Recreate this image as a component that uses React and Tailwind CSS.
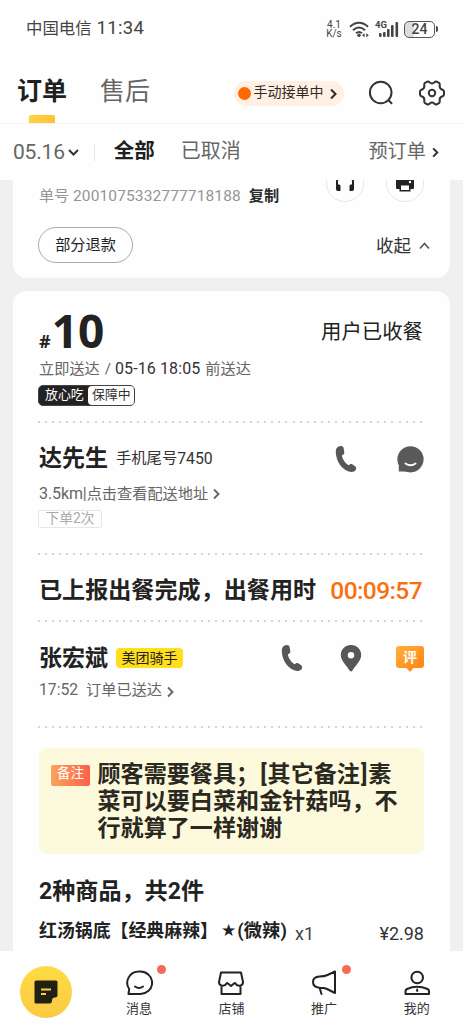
import React from "react";

const Chevron = ({ className, d = "M2 1.5 L6.5 6 L2 10.5", w = 2 }) => (
  <svg viewBox="0 0 8 12" className={className} fill="none" stroke="currentColor" strokeWidth={w}>
    <path d={d} />
  </svg>
);

const Dots = ({ className = "" }) => (
  <div
    className={
      "h-[2px] w-[387px] shrink-0 -ml-px bg-[repeating-linear-gradient(90deg,#d4d4d4_0_2px,transparent_2px_7.07px)] " +
      className
    }
  />
);

const Phone = () => (
  <svg viewBox="0 0 22 28" className="h-[28px] w-[22px]" fill="#55585a">
    <path d="M5.500 1.100C3 1.300.8 3 .8 7C.9 16.500 7.500 26.300 16.200 26.900C18.600 27 20.300 26 21 24.200C21.500 22.900 21 21.800 19.800 21L17.200 19.300C15.800 18.400 14.900 19.200 13.700 20.300C10.500 18.800 7.300 14 6.900 10.300C8.500 9.700 9.500 9.200 9.300 7.500L8.700 3.500C8.400 1.700 7.200 .9 5.500 1.100Z" />
  </svg>
);

function StatusBar() {
  return (
    <div className="flex h-[58px] items-center pl-[26px] pr-[25px] text-[#444]">
      <span className="mt-px whitespace-nowrap text-[16.400px]">中国电信</span>
      <span className="ml-[5px] text-[18.500px] tracking-[0.300px]">11:34</span>
      <div className="ml-auto flex items-center">
        <div className="mr-[7px] w-[16px] text-center text-[10px] leading-[9.500px]">
          4.1
          <br />
          K/s
        </div>
        <svg viewBox="0 0 20 17" className="h-[17px] w-[20px]" fill="none" stroke="#444" strokeWidth="2">
          <path d="M1 5.800C6.500.500 13.500.500 19 5.800M4 9.200C8 5.500 12 5.500 16 9.200M7 12.300Q10 9.600 13 12.300" />
          <circle cx="10" cy="14.300" r="1.700" fill="#444" stroke="none" />
          <path d="M13 14.200L15.600 12.200V16.200ZM19.800 14.200L17.200 12.200V16.200Z" fill="#444" stroke="none" />
        </svg>
        <div className="relative ml-[6px] h-[18px] w-[24px]">
          <span className="absolute left-0 top-0 text-[9.500px] font-bold leading-[9px]">4G</span>
          <svg viewBox="0 0 24 18" className="h-[18px] w-[24px]" fill="#444">
            <rect x="4" y="13" width="2.600" height="4" rx="1" />
            <rect x="8" y="12" width="2.600" height="5" rx="1" />
            <rect x="12" y="9" width="2.600" height="8" rx="1" />
            <rect x="16" y="5" width="2.600" height="12" rx="1" />
            <rect x="20.500" y="2" width="2.600" height="15" rx="1" />
          </svg>
        </div>
        <div className="ml-[5px] flex h-[17px] w-[31px] items-center justify-center rounded-[5px] border-[1.500px] border-[#555] bg-[linear-gradient(90deg,#ddd_0_30%,#fff_30%)] text-[14px] font-medium leading-none">
          24
        </div>
        <div className="ml-px h-[6px] w-[2px] rounded-r bg-[#444]" />
      </div>
    </div>
  );
}

function Header() {
  return (
    <div className="flex h-[66px] border-b border-[#f4f4f4] pl-[16px] pr-[18px]">
      <div className="flex w-[52px] flex-col items-center">
        <span className="mt-[19px] whitespace-nowrap text-[25px] font-bold leading-[30px] text-[#202020]">订单</span>
        <span className="mt-[8px] h-[8px] w-[26px] rounded-t-[2px] bg-linear-to-r from-[#ffd43d] to-[#ffc13b]" />
      </div>
      <span className="ml-[32px] mt-[19px] whitespace-nowrap text-[25px] leading-[30px] text-[#666]">售后</span>
      <div className="ml-auto mt-[23px] flex h-[25px] w-[110px] items-center rounded-full bg-[#fff0e5] pl-[4px] text-[#35291f]">
        <span className="h-[13px] w-[13px] rounded-full bg-[#ff6a00]" />
        <span className="-mt-[3px] ml-[2.500px] whitespace-nowrap text-[14px] leading-[20px]">手动接单中</span>
        <Chevron className="ml-[5px] h-[12px] w-[8px]" />
      </div>
      <svg viewBox="0 0 26 26" className="ml-[24px] mt-[22px] h-[26px] w-[26px]" fill="none" stroke="#333" strokeWidth="2" strokeLinecap="round">
        <circle cx="12.700" cy="12.500" r="10.800" />
        <path d="M20.500 20.200L23.500 23.200" />
      </svg>
      <svg viewBox="0 0 26 26" className="ml-[25px] mt-[22px] h-[26px] w-[26px]" fill="none" stroke="#333" strokeWidth="2" strokeLinejoin="round">
        <path d="M8.200 1.700Q9.500 1.300 10.500 2.300Q13 4.600 15.500 2.300Q16.500 1.300 17.800 1.700L20.300 3.200Q21 4 20.700 5.400Q20.300 8.600 23 9.500Q24.800 10.100 25 11.500V14.500Q24.800 15.900 23 16.500Q20.300 17.400 20.700 20.600Q21 22 20.300 22.800L17.800 24.300Q16.500 24.700 15.500 23.700Q13 21.400 10.500 23.700Q9.500 24.700 8.200 24.300L5.700 22.800Q5 22 5.300 20.600Q5.700 17.400 3 16.500Q1.200 15.900 1 14.500V11.500Q1.200 10.100 3 9.500Q5.700 8.600 5.300 5.400Q5 4 5.700 3.200Z" />
        <circle cx="13" cy="13" r="3.200" />
      </svg>
    </div>
  );
}

function Filters() {
  return (
    <div className="flex h-[56px] items-center pl-[13px] pr-[24px] text-[#666]">
      <span className="mt-[2px] text-[21px] tracking-[-0.200px]">05.16</span>
      <svg viewBox="0 0 11 7" className="ml-[3px] h-[7px] w-[11px]" fill="none" stroke="#333" strokeWidth="2">
        <path d="M1 1L5.500 5.500L10 1" />
      </svg>
      <span className="ml-[15px] h-[17px] w-px bg-[#e4e4e4]" />
      <span className="ml-[19px] -mt-[2px] whitespace-nowrap text-[20.500px] font-bold text-[#202020]">全部</span>
      <span className="ml-[26px] -mt-[2px] whitespace-nowrap text-[20px]">已取消</span>
      <span className="ml-auto mt-px whitespace-nowrap text-[19.200px]">预订单</span>
      <Chevron className="ml-[5px] h-[11px] w-[8px] text-[#333]" w={2.2} />
    </div>
  );
}

function PreviousOrder() {
  return (
    <div className="mx-[13px] flex h-[98px] flex-col overflow-hidden rounded-b-[14px] bg-[#fefefe] pl-[26px] pr-[20px]">
      <div className="flex h-[40px] items-start">
        <span className="mt-[5px] whitespace-nowrap text-[15px] leading-[22px] text-[#959595]">单号</span>
        <span className="ml-[4px] mt-[5px] text-[15.500px] leading-[22px] tracking-[0.120px] text-[#959595]">2001075332777718188</span>
        <span className="ml-[8px] mt-[5px] whitespace-nowrap text-[15.200px] font-bold leading-[22px] text-[#2c2c2c]">复制</span>
        <div className="ml-auto mr-[22px] mt-[-16px] flex h-[38px] w-[38px] shrink-0 items-center justify-center rounded-full border border-[#e5e5e5]">
          <svg viewBox="0 0 20 20" className="h-[20px] w-[20px]" fill="none" stroke="#222" strokeWidth="2">
            <path d="M2 14V9a8 8 0 0 1 16 0v5" />
            <path d="M1 11.500H4.500Q5.500 12 5.500 13V18H2.800Q1 18 1 16ZM19 11.500H15.500Q14.500 12 14.500 13V18H17.200Q19 18 19 16Z" fill="#222" stroke="none" />
          </svg>
        </div>
        <div className="mr-[6px] mt-[-16px] flex h-[38px] w-[38px] shrink-0 items-center justify-center rounded-full border border-[#e5e5e5]">
          <svg viewBox="0 0 18 20" className="h-[20px] w-[18px]" fill="#222">
            <path d="M4 1H14V5H4ZM2 6H16Q18 6 18 8V15Q18 16 17 16H14.500V18.500H3.500V16H1Q0 16 0 15V8Q0 6 2 6Z" />
            <path d="M5 12.500H13V17H5Z" fill="#fff" />
            <circle cx="14" cy="9" r="1.200" fill="#fff" />
          </svg>
        </div>
      </div>
      <div className="mt-[7px] flex h-[36px] items-center">
        <span className="-ml-px flex h-[36px] w-[95px] items-center justify-center whitespace-nowrap rounded-full border border-[#aaa] text-[15.200px] text-[#222]">部分退款</span>
        <span className="ml-auto mt-[3px] whitespace-nowrap text-[17.500px] text-[#333]">收起</span>
        <svg viewBox="0 0 11 8" className="ml-[8px] mt-[2px] h-[8px] w-[11px]" fill="none" stroke="#555" strokeWidth="1.600">
          <path d="M1 6.500L5.500 1.500L10 6.500" />
        </svg>
      </div>
    </div>
  );
}

function Order() {
  return (
    <div className="mx-[13px] mt-[13px] flex h-[660px] flex-col rounded-t-[14px] bg-[#fefefe] pl-[26px] pr-[26px] text-[#222]">
      <div className="flex h-[68px] items-start">
        <span className="mt-[40px] font-['Open_Sans'] text-[18px] font-bold leading-[20px]">#</span>
        <span className="ml-[1px] mt-[15px] h-[48px] font-['Open_Sans'] text-[46px] font-bold leading-[48px]">10</span>
        <span className="ml-auto mr-px mt-[29px] whitespace-nowrap text-[20.400px] leading-[24px]">用户已收餐</span>
      </div>
      <div className="flex h-[20px] items-center whitespace-nowrap text-[15.200px] text-[#666]">
        <span>立即送达</span>
        <span className="ml-[5px]">/</span>
        <span className="ml-[4px] text-[16px] tracking-[0.100px] text-[#333]">05-16 18:05</span>
        <span className="ml-[5px]">前送达</span>
      </div>
      <div className="-ml-px mt-[6px] flex h-[21px] w-[97px] shrink-0 overflow-hidden whitespace-nowrap rounded-[5px] border border-[#444] bg-[#222] text-[12.900px] leading-[17px]">
        <span className="w-[49px] pl-[6px] text-white">放心吃</span>
        <span className="flex-1 rounded-l-[4px] bg-white pl-[4px] text-[#333]">保障中</span>
      </div>
      <Dots className="mt-[15px]" />
      <div className="mt-[20px] flex h-[32px] items-center">
        <span className="whitespace-nowrap text-[23px] font-bold">达先生</span>
        <span className="-mt-px ml-[8px] whitespace-nowrap text-[15.300px] text-[#333]">手机尾号</span>
        <span className="-mt-px text-[15.800px]  text-[#333]">7450</span>
        <div className="ml-auto mr-[39px]"><Phone /></div>
        <svg viewBox="0 0 28 27" className="h-[27px] w-[28px]" fill="#595959">
          <circle cx="14.500" cy="13.300" r="13.100" />
          <path d="M2.800 14V25.500H12V20Z" />
          <path d="M9.500 17.500Q14.500 21 19.500 17.500" fill="none" stroke="#fff" strokeWidth="2" strokeLinecap="round" />
        </svg>
      </div>
      <div className="mt-[8px] flex h-[22px] items-center whitespace-nowrap text-[15.200px] text-[#666]">
        <span className="text-[16px] tracking-[-0.100px]">3.5km|</span>
        <span>点击查看配送地址</span>
        <Chevron className="ml-[4px] h-[12px] w-[8px]" w={1.9} />
      </div>
      <div className="mt-[5px] -ml-px flex h-[18px] w-[64px] shrink-0 items-center justify-center whitespace-nowrap rounded-[2px] border border-[#e6e6e6] text-[13.800px] leading-none text-[#aaa]">下单2次</div>
      <Dots className="mt-[25px]" />
      <div className="mt-[20px] flex h-[32px] items-center whitespace-nowrap">
        <span className="text-[23.100px] font-bold">已上报出餐完成，出餐用时</span>
        <span className="ml-auto mr-[2px] text-[24.500px] font-medium tracking-[-0.600px] text-[#fa7010]">00:09:57</span>
      </div>
      <Dots className="mt-[13px]" />
      <div className="mt-[20px] flex h-[32px] items-center">
        <span className="mt-[2px] whitespace-nowrap text-[23px] font-bold">张宏斌</span>
        <span className="ml-[8px] flex h-[20px] w-[67px] items-center justify-center whitespace-nowrap rounded-[4px] bg-[#ffdf1c] pb-px text-[14px] leading-none">美团骑手</span>
        <div className="ml-auto mr-[37px]"><Phone /></div>
        <svg viewBox="0 0 22 28" className="mr-[34px] h-[28px] w-[22px]">
          <path fillRule="evenodd" fill="#55585a" d="M11 1C17 1 21.200 5.500 21.200 11C21.200 17 15 22 12.300 26.700Q11 28.200 9.700 26.700C7 22 .8 17 .8 11C.8 5.500 5 1 11 1ZM11 8A3.200 3.200 0 1 0 11 14.400A3.200 3.200 0 0 0 11 8Z" />
        </svg>
        <div className="relative h-[27px] w-[28px]">
          <svg viewBox="0 0 28 27" className="h-[27px] w-[28px]">
            <defs>
              <linearGradient id="review" x1="0" y1="0" x2="1" y2="1">
                <stop stopColor="#ffb23a" />
                <stop offset="1" stopColor="#ff7f12" />
              </linearGradient>
            </defs>
            <path fill="url(#review)" d="M3 1H25Q28 1 28 4V20Q28 23 25 23H17.500L14 27L10.500 23H3Q0 23 0 20V4Q0 1 3 1Z" />
          </svg>
          <span className="absolute inset-x-0 top-[2px] text-center text-[14px] font-bold leading-[20px] text-white">评</span>
        </div>
      </div>
      <div className="mt-[5px] flex h-[22px] items-center whitespace-nowrap text-[15.200px] text-[#666]">
        <span className="text-[15.700px]">17:52</span>
        <span className="ml-[8px]">订单已送达</span>
        <Chevron className="ml-[4px] mt-[4px] h-[12px] w-[8px]" w={1.9} />
      </div>
      <Dots className="mt-[25px]" />
      <div className="mt-[20px] flex h-[106px] w-[385px] shrink-0 rounded-[8px] bg-[#fdf9dc] pl-[12px]">
        <span className="mt-[17px] flex h-[21px] w-[39px] items-start justify-center whitespace-nowrap rounded-[2px] bg-linear-to-r from-[#f9a35c] to-[#fb6048] text-[13.500px] leading-[16px] text-white">备注</span>
        <p className="ml-[7.500px] mt-[13px] whitespace-nowrap text-[23.100px] font-bold leading-[27px] text-[#2a2820]">
          顾客需要餐具；<span className="px-px">[</span>其它备注<span className="px-px">]</span>素
          <br />
          菜可以要白菜和金针菇吗，不
          <br />
          行就算了一样谢谢
        </p>
      </div>
      <div className="mt-[22px] flex h-[32px] items-center whitespace-nowrap text-[23.100px] font-bold">2种商品，共2件</div>
      <div className="mt-[10px] flex h-[26px] items-center whitespace-nowrap">
        <span className="text-[17.900px] font-bold">红汤锅底【经典麻辣】</span>
        <span className="ml-[3px] font-['DejaVu_Sans'] text-[17px]">★</span>
        <span className="ml-px text-[18.200px] font-bold tracking-[0.200px]">(微辣)</span>
        <span className="ml-[8px] mt-[5px] text-[18px] text-[#444]">x1</span>
        <span className="ml-auto mt-[5px] text-[18px] text-[#333]">¥2.98</span>
      </div>
    </div>
  );
}

const Tab = ({ label, dot, children }) => (
  <div className="flex flex-col items-center">
    <div className="relative mt-[17px] h-[28px] w-[28px]">
      <svg viewBox="0 0 28 28" className="h-[28px] w-[28px]" fill="none" stroke="#222" strokeWidth="2" strokeLinejoin="round" strokeLinecap="round">
        {children}
      </svg>
      {dot && <span className="absolute -right-[13px] -top-[3px] h-[9px] w-[9px] rounded-full bg-[#f56b58]" />}
    </div>
    <span className="mt-[4px] whitespace-nowrap text-[13px] leading-[18px] text-[#333]">{label}</span>
  </div>
);

function BottomNav() {
  return (
    <div className="grid h-[73px] grid-cols-5 bg-[#fefefe]">
      <div className="ml-[20px] mt-[15px] flex h-[52px] w-[52px] items-center justify-center rounded-full bg-linear-to-b from-[#fddc43] to-[#fcc942]">
        <svg viewBox="0 0 24 24" className="h-[24px] w-[24px]">
          <path d="M2 .5H22Q23.500 .5 23.500 2V15Q23.500 17.500 21 17.500Q18 17.500 18 20.500Q18 23.500 15.500 23.500H2Q.5 23.500 .5 22V2Q.5 .5 2 .5Z" fill="#222015" />
          <path d="M7 9.500H17M7 14H12" stroke="#fccf43" strokeWidth="2" />
        </svg>
      </div>
      <Tab label="消息" dot>
        <path d="M14.200 3.500A11.800 11.300 0 1 1 14.200 26H3.500L4.200 21A11.800 11.300 0 0 1 14.200 3.500Z" />
        <path d="M10 18.500Q14 21.300 18 18.500" />
      </Tab>
      <Tab label="店铺">
        <path d="M4 4.500H24L26 14C26 18.700 20 18.700 18.500 15.500Q17.800 14.500 17 15.500L14 18L11 15.500Q10.200 14.500 9.500 15.500C8 18.700 2 18.700 2 14ZM4.500 18V26H23.500V18" />
      </Tab>
      <Tab label="推广" dot>
        <path d="M25 3.500V25L17 21Q14.500 19.800 9.500 19.800Q3 19 3 14Q3 9 9.500 8.500Q14.500 8.500 17.500 7ZM9.800 20.500L11.500 26" />
      </Tab>
      <Tab label="我的">
        <circle cx="14.200" cy="9.500" r="5.800" />
        <path d="M2.500 26V23.300Q2.500 21.800 4 21Q14 16.500 24.500 21Q26 21.800 26 23.300V26ZM14.200 21.500V23" />
      </Tab>
    </div>
  );
}

export default function App() {
  return (
    <div className="h-[1024px] w-[463px] overflow-hidden bg-[#fefefe] font-[Roboto,'Noto_Sans_CJK_SC',sans-serif]">
      <StatusBar />
      <Header />
      <Filters />
      <div className="h-[771px] overflow-hidden bg-[#f0f0f0]">
        <PreviousOrder />
        <Order />
      </div>
      <BottomNav />
    </div>
  );
}
